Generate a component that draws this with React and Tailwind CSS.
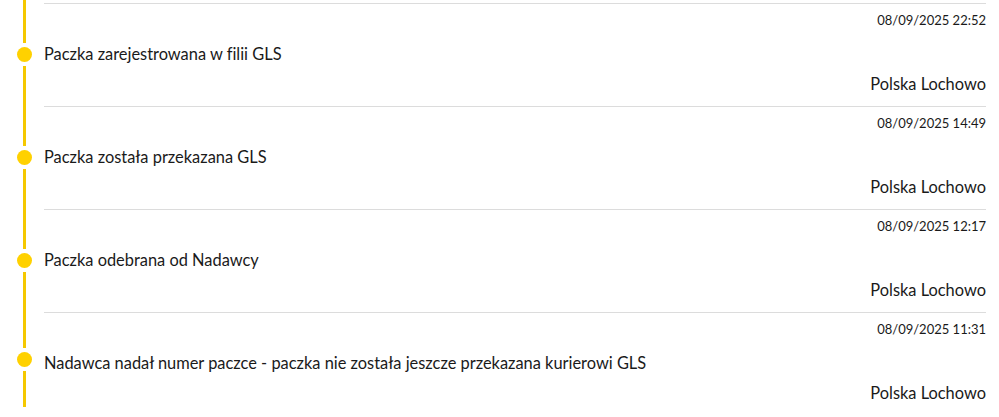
import React from "react";

const events = [
    { date: "08/09/2025 22:52", title: "Paczka zarejestrowana w filii GLS", place: "Polska Lochowo" },
    { date: "08/09/2025 14:49", title: "Paczka została przekazana GLS", place: "Polska Lochowo" },
    { date: "08/09/2025 12:17", title: "Paczka odebrana od Nadawcy", place: "Polska Lochowo" },
    {
        date: "08/09/2025 11:31",
        title: "Nadawca nadał numer paczce - paczka nie została jeszcze przekazana kurierowi GLS",
        place: "Polska Lochowo",
    },
];

const TimelineRow = ({ event, last }) => (
    <div className="flex">
        <div className="w-[44px] shrink-0 flex">
            <div className="ml-[16px] w-[16px] flex flex-col items-center">
                <div className="w-[3px] flex-1 bg-[#f5c800]" />
                <div className="w-[15px] h-[15px] rounded-full bg-[#ffd100] my-[4px]" />
                <div className={`w-[3px] flex-1 bg-[#f5c800] ${last ? "mb-[8px]" : ""}`} />
            </div>
        </div>
        <div className="flex-1 border-t border-[#dcdcdc] pt-[8px] pb-[12px]">
            <div className="text-right text-[13px] leading-[16px] text-[#1a1a1a]">{event.date}</div>
            <div className="mt-[16px] text-[16.4px] leading-[20px] text-[#1a1a1a]">{event.title}</div>
            <div className="mt-[10px] text-right text-[16.4px] leading-[20px] text-[#1a1a1a]">{event.place}</div>
        </div>
    </div>
);

export default function App() {
    return (
        <div
            className="bg-white w-[999px] h-[417px] overflow-hidden pr-[13px] [font-variant-ligatures:none]"
            style={{ fontFamily: "Lato, 'Noto Sans', sans-serif" }}
        >
            <div className="flex h-[3px]">
                <div className="w-[44px] shrink-0 flex">
                    <div className="ml-[16px] w-[16px] flex justify-center">
                        <div className="w-[3px] h-full bg-[#f5c800]" />
                    </div>
                </div>
            </div>
            {events.map((e, i) => (
                <TimelineRow key={i} event={e} last={i === events.length - 1} />
            ))}
        </div>
    );
}
